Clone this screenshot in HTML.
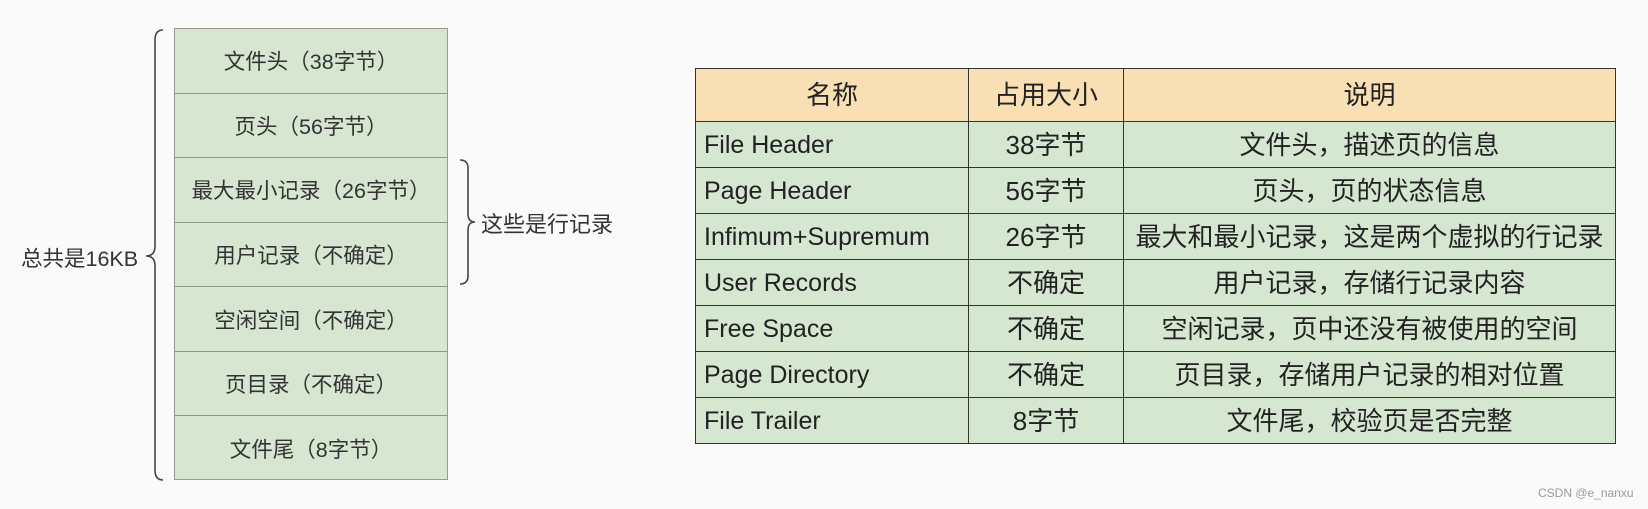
<!DOCTYPE html>
<html><head><meta charset="utf-8"><style>
body{margin:0;width:1648px;height:509px;background:#fafafa;position:relative;overflow:hidden;font-family:"Liberation Sans","Noto Sans CJK SC",sans-serif;color:#222}
.stack{position:absolute;left:174px;top:28px;width:274px;height:452px;border:1px solid #999;box-sizing:border-box;background:#d6e6d0}
.stack div{height:64.57px;box-sizing:border-box;border-bottom:1.5px solid #8a9a88;display:flex;align-items:center;justify-content:center;font-size:21.5px;color:#333;white-space:nowrap}
.stack div:last-child{border-bottom:none}
.lbl{position:absolute;font-size:21.5px;color:#333;white-space:nowrap}
table{position:absolute;left:695px;top:68px;border-collapse:collapse;font-size:26px}
td{border:1.5px solid #333;height:45px;padding:0;background:#d5e6d1;text-align:center;color:#222;line-height:30px;white-space:nowrap}
tr.h td{background:#f8dfb4;height:52px}
td.n{text-align:left;padding-left:8px;font-size:25px}
.wm{position:absolute;left:1538px;top:486px;font-size:12px;color:#999}
</style></head><body>
<svg style="position:absolute;left:0;top:0" width="700" height="509">
<path d="M163 30 Q155 30 155 40 L155 246 Q155 256 146 256 Q155 256 155 266 L155 470 Q155 480 163 480" fill="none" stroke="#444" stroke-width="1.6"/>
<path d="M460 160 Q468 160 468 168 L468 214 Q468 222 475 222 Q468 222 468 230 L468 276 Q468 284 460 284" fill="none" stroke="#444" stroke-width="1.6"/>
</svg>
<div class="lbl" style="left:21px;top:242px">总共是16KB</div>
<div class="lbl" style="left:481px;top:207px;font-size:22px">这些是行记录</div>
<div class="stack">
<div>文件头（38字节）</div><div>页头（56字节）</div><div>最大最小记录（26字节）</div><div>用户记录（不确定）</div><div>空闲空间（不确定）</div><div>页目录（不确定）</div><div>文件尾（8字节）</div>
</div>
<table>
<tr class="h"><td style="width:272px">名称</td><td style="width:154px">占用大小</td><td style="width:491px">说明</td></tr>
<tr><td class="n">File Header</td><td>38字节</td><td>文件头，描述页的信息</td></tr>
<tr><td class="n">Page Header</td><td>56字节</td><td>页头，页的状态信息</td></tr>
<tr><td class="n">Infimum+Supremum</td><td>26字节</td><td>最大和最小记录，这是两个虚拟的行记录</td></tr>
<tr><td class="n">User Records</td><td>不确定</td><td>用户记录，存储行记录内容</td></tr>
<tr><td class="n">Free Space</td><td>不确定</td><td>空闲记录，页中还没有被使用的空间</td></tr>
<tr><td class="n">Page Directory</td><td>不确定</td><td>页目录，存储用户记录的相对位置</td></tr>
<tr><td class="n">File Trailer</td><td>8字节</td><td>文件尾，校验页是否完整</td></tr>
</table>
<div class="wm">CSDN @e_nanxu</div>
</body></html>
